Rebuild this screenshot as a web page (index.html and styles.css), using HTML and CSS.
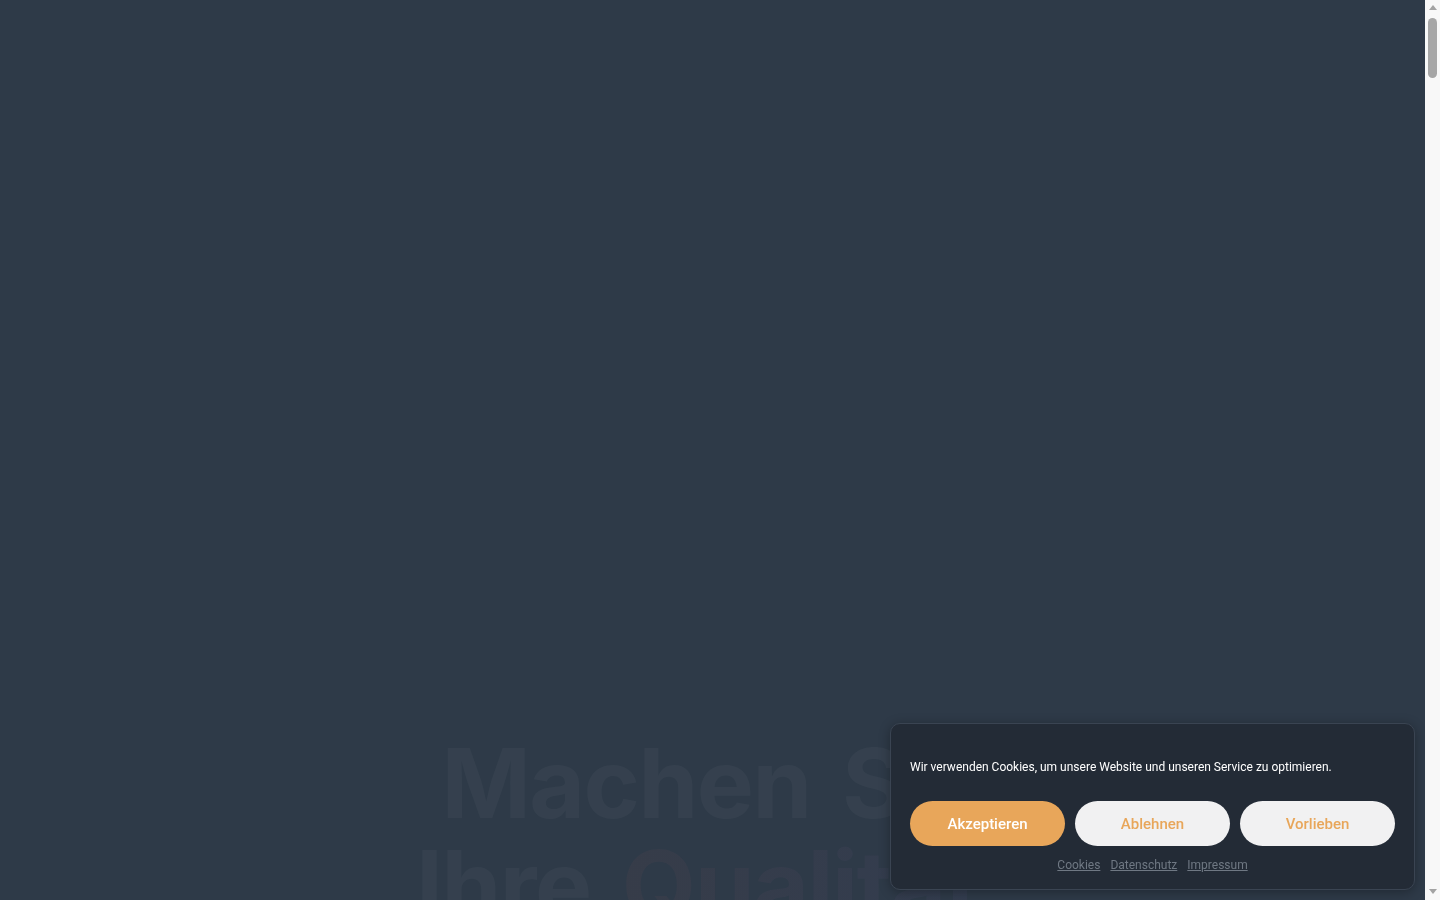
FILE: index.html
```html
<!DOCTYPE html>
<html lang="de">
<head>
<meta charset="utf-8">
<title>Machen Sie Ihre Qualität sichtbar</title>
<link rel="stylesheet" href="styles.css">
</head>
<body>
<main class="page">
  <section class="hero">
    <h1 class="hero-title">
      <span class="line">Machen Sie</span>
      <span class="line">Ihre <span class="accent">Qualität</span>,</span>
      <span class="line">sichtbar.</span>
    </h1>
  </section>
  <section class="rest"></section>
</main>

<div class="scrollbar" aria-hidden="true">
  <span class="sb-arrow sb-up"></span>
  <span class="sb-thumb"></span>
  <span class="sb-fill"></span>
  <span class="sb-arrow sb-down"></span>
</div>

<div class="cookie-banner" role="dialog" aria-label="Cookie-Zustimmung">
  <p class="cookie-text">Wir verwenden Cookies, um unsere Website und unseren Service zu optimieren.</p>
  <div class="cookie-buttons">
    <button class="btn btn-accept">Akzeptieren</button>
    <button class="btn btn-light">Ablehnen</button>
    <button class="btn btn-light">Vorlieben</button>
  </div>
  <nav class="cookie-links">
    <a href="#">Cookies</a>
    <a href="#">Datenschutz</a>
    <a href="#">Impressum</a>
  </nav>
</div>
</body>
</html>
```

FILE: styles.css
```css
html, body {
  margin: 0;
  padding: 0;
}

body {
  background: #2e3a48;
  font-family: Roboto, "Liberation Sans", sans-serif;
  padding-right: 15px;
}

.page {
  display: flex;
  flex-direction: column;
}

.hero {
  padding-top: 732px;
  display: flex;
  justify-content: center;
}

.hero-title {
  margin: 0;
  display: flex;
  flex-direction: column;
  align-items: center;
  font-family: Inter, "Noto Sans", sans-serif;
  font-weight: 700;
  font-size: 96px;
  line-height: 102px;
  letter-spacing: -1.5px;
  word-spacing: 10px;
  color: rgba(255, 255, 255, 0.035);
}

.line {
  display: block;
  white-space: nowrap;
}

.accent {
  background: linear-gradient(90deg, rgba(240, 120, 110, 0.045), rgba(160, 130, 255, 0.045));
  -webkit-background-clip: text;
  background-clip: text;
  color: transparent;
}

.rest {
  height: 12000px;
}

/* classic scrollbar rail */
.scrollbar {
  position: fixed;
  top: 0;
  right: 0;
  width: 15px;
  height: 100vh;
  background: #f8f8f8;
  display: flex;
  flex-direction: column;
  align-items: center;
}

.sb-arrow {
  width: 0;
  height: 0;
  border-left: 4px solid transparent;
  border-right: 4px solid transparent;
}

.sb-up {
  margin-top: 5px;
  border-bottom: 5px solid #a3a3a3;
}

.sb-thumb {
  margin-top: 8px;
  width: 9px;
  height: 60px;
  border-radius: 5px;
  background: #a6a6a6;
}

.sb-fill {
  flex: 1;
}

.sb-down {
  margin-bottom: 6px;
  border-top: 5px solid #a3a3a3;
}

/* cookie consent */
.cookie-banner {
  position: fixed;
  right: 25px;
  bottom: 10px;
  width: 525px;
  box-sizing: border-box;
  padding: 34px 19px 15px;
  background: #232b36;
  border: 1px solid #3a4452;
  border-radius: 10px;
  box-shadow: 0 2px 12px rgba(0, 0, 0, 0.3);
  display: flex;
  flex-direction: column;
}

.cookie-text {
  margin: 0;
  font-size: 12px;
  line-height: 18px;
  color: #ffffff;
}

.cookie-buttons {
  margin-top: 25px;
  display: grid;
  grid-template-columns: 1fr 1fr 1fr;
  gap: 10px;
}

.btn {
  height: 45px;
  border: none;
  border-radius: 23px;
  font-family: Roboto, "Liberation Sans", sans-serif;
  font-size: 15px;
  font-weight: 500;
  cursor: pointer;
}

.btn-accept {
  background: #e8a65a;
  color: #ffffff;
}

.btn-light {
  background: #f1f1f2;
  color: #e8a65a;
}

.cookie-links {
  margin-top: 10px;
  display: flex;
  justify-content: center;
  gap: 10px;
  font-size: 12px;
  line-height: 18px;
}

.cookie-links a {
  color: #6f7883;
  text-decoration: underline;
}
```
